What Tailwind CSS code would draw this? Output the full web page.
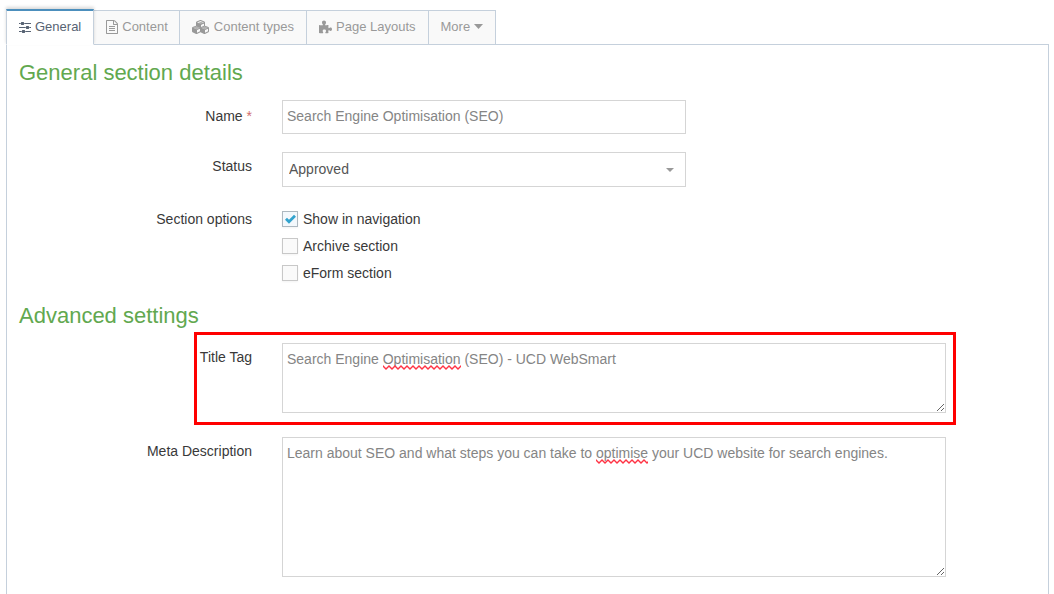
<!DOCTYPE html>
<html lang="en">
  <head>
    <meta charset="UTF-8" />
    <meta name="viewport" content="width=device-width, initial-scale=1.0" />
    <title>General section details</title>
    <script src="https://cdn.jsdelivr.net/npm/@tailwindcss/browser@4"></script>
  </head>
  <body class="bg-white min-h-screen flex flex-col pt-[9px] pl-1.5 pr-[5px] overflow-hidden font-['Liberation_Sans',Arial,sans-serif] text-sm leading-5 text-[#393939]">
    <!-- Tabs -->
    <nav class="relative z-10 flex items-end text-[13px] text-[#999]" role="tablist">
      <button type="button" role="tab" aria-selected="true" class="relative z-10 -mb-px flex h-9 items-center gap-1 border border-t-2 border-[#c5d0dc] border-t-[#4c8fbd] border-b-white bg-white px-3 pb-0.5 text-[#576373] shadow-[0_-2px_3px_0_rgba(0,0,0,0.15)]">
        <svg class="h-3.5 w-3" viewBox="128 0 1536 1792" fill="currentColor" aria-hidden="true"><path d="M480 1408v128h-352v-128h352zm352-128q26 0 45 19t19 45v256q0 26-19 45t-45 19h-256q-26 0-45-19t-19-45v-256q0-26 19-45t45-19h256zm160-384v128h-864v-128h864zm-640-512v128h-224v-128h224zm1312 1024v128h-736v-128h736zm-960-1152q26 0 45 19t19 45v256q0 26-19 45t-45 19h-256q-26 0-45-19t-19-45v-256q0-26 19-45t45-19h256zm640 512q26 0 45 19t19 45v256q0 26-19 45t-45 19h-256q-26 0-45-19t-19-45v-256q0-26 19-45t45-19h256zm320 128v128h-224v-128h224zm0-512v128h-864v-128h864z" /></svg>
        General
      </button>
      <button type="button" role="tab" class="-ml-px flex h-[34px] items-center gap-1 border border-b-0 border-[#c5d0dc] bg-[#f9f9f9] pr-[11px] pb-0.5 pl-3">
        <svg class="h-3.5 w-3" viewBox="128 0 1536 1792" fill="currentColor" aria-hidden="true"><path d="M1596 380q28 28 48 76t20 88v1152q0 40-28 68t-68 28h-1344q-40 0-68-28t-28-68v-1600q0-40 28-68t68-28h896q40 0 88 20t76 48zm-444-244v376h376q-10-29-22-41l-313-313q-12-12-41-22zm384 1528v-1024h-416q-40 0-68-28t-28-68v-416h-768v1536h1280zm-1024-864q0-14 9-23t23-9h704q14 0 23 9t9 23v64q0 14-9 23t-23 9h-704q-14 0-23-9t-9-23v-64zm736 224q14 0 23 9t9 23v64q0 14-9 23t-23 9h-704q-14 0-23-9t-9-23v-64q0-14 9-23t23-9h704zm0 256q14 0 23 9t9 23v64q0 14-9 23t-23 9h-704q-14 0-23-9t-9-23v-64q0-14 9-23t23-9h704z" /></svg>
        Content
      </button>
      <button type="button" role="tab" class="-ml-px flex h-[34px] items-center gap-1 border border-b-0 border-[#c5d0dc] bg-[#f9f9f9] px-3 pb-0.5">
        <svg class="h-3.5 w-[18px]" viewBox="0 0 2304 1792" fill="currentColor" aria-hidden="true"><path opacity=".75" d="M576 1191l-440-190 440-190 440 190zM1600 1191l-440-190 440-190 440 190zM1152 614L710 425l442-190 442 190z" /><path d="M640 1632l384-192v-314l-384 164v342zm-64-454l404-173-404-173-404 173zm1088 454l384-192v-314l-384 164v342zm-64-454l404-173-404-173-404 173zm-448-293l384-165v-266l-384 164v267zm-64-379l441-189-441-189-441 189zm1088 518v416q0 36-19 67t-52 47l-448 224q-25 14-57 14t-57-14l-448-224q-4-2-7-4-2 2-7 4l-448 224q-25 14-57 14t-57-14l-448-224q-33-16-52-47t-19-67v-416q0-38 21.5-70t56.5-48l434-186v-400q0-38 21.5-70t56.5-48l448-192q23-10 50-10t50 10l448 192q35 16 56.5 48t21.5 70v400l434 186q36 16 57 48t21 70z" /></svg>
        Content types
      </button>
      <button type="button" role="tab" class="-ml-px flex h-[34px] items-center gap-1 border border-b-0 border-[#c5d0dc] bg-[#f9f9f9] px-3 pb-0.5">
        <svg class="h-3.5 w-[13px]" viewBox="0 0 13 14" fill="currentColor" aria-hidden="true"><path d="M0 5.1c1.200.2 3.700.4 3.900-.2.2-.7-.9-1.100-.9-2.500C3 1.200 3.900.500 5 .500s2 .7 2 1.900c0 1.400-1 1.800-.9 2.500.1.600 2.600.300 3.400.200-.1 1-.3 3.100.3 3.200.6.200.9-.7 1.800-.7.8 0 1.400.7 1.400 1.700s-.6 1.700-1.500 1.700c-.9 0-1.100-.8-1.700-.7-.7.100-.5 1.700-.3 2.700-1 .2-2.900.4-3.200-.1-.3-.6.7-.9.7-2 0-.9-.7-1.400-1.600-1.400-1 0-1.700.5-1.700 1.400 0 1 .8 1.300.5 2-.3.600-2.900.300-4.200.100z" /></svg>
        Page Layouts
      </button>
      <button type="button" aria-haspopup="menu" class="-ml-px flex h-[34px] items-center gap-1 border border-b-0 border-[#c5d0dc] bg-[#f9f9f9] px-3 pb-0.5">
        More
        <svg class="h-2 w-[9px]" viewBox="0 0 9 8" fill="currentColor" aria-hidden="true"><path d="M0 1h9L4.500 6z" /></svg>
      </button>
    </nav>

    <main class="grow border border-b-0 border-[#c5d0dc] px-3 pt-3">
      <form>
        <h2 class="py-0.5 text-[22px] leading-7 text-[#62a84f]">General section details</h2>
        <div class="mt-2.5 grid grid-cols-[233px_1fr] gap-x-[30px]">
          <label for="name" class="pt-[7px] text-right">Name <span class="text-[#d16e6c]">*</span></label>
          <input id="name" type="text" value="Search Engine Optimisation (SEO)" class="mt-px h-[34px] w-full max-w-[404px] border border-[#d5d5d5] bg-white px-1 pb-0.5 text-[#858585] outline-none" />
        </div>
        <div class="mt-[15px] grid grid-cols-[233px_1fr] gap-x-[30px]">
          <label for="status" class="pt-[7px] text-right">Status</label>
          <div class="relative mt-[3px] max-w-[404px]">
            <select id="status" class="block h-[35px] w-full appearance-none border border-[#d5d5d5] bg-white px-1.5 pb-0.5 text-[#555] outline-none">
              <option>Approved</option>
            </select>
            <svg class="pointer-events-none absolute top-4 right-3 h-1 w-2" viewBox="0 0 8 4" fill="#999" aria-hidden="true"><path d="M0 0h8L4 4z" /></svg>
          </div>
        </div>
        <fieldset class="mt-[15px] grid grid-cols-[233px_1fr] gap-x-[30px]" aria-labelledby="options">
          <span id="options" class="pt-[7px] text-right">Section options</span>
          <div class="flex flex-col items-start gap-[7px] pt-[7px]">
            <label class="relative flex items-center gap-[5px]">
              <input type="checkbox" checked class="peer size-4 appearance-none border border-[#c8c8c8] bg-[#fafafa] shadow-[0_1px_2px_rgba(0,0,0,0.05)] checked:border-[#adb8c0] checked:bg-[#f3f8fc]" />
              <svg class="absolute top-[5px] left-[3px] hidden h-2.5 w-[11px] peer-checked:block" viewBox="0 0 11 9" fill="none" stroke="#32a3ce" stroke-width="2.800" aria-hidden="true"><path d="M1 4.200l3 3L10 1.300" /></svg>
              Show in navigation
            </label>
            <label class="flex items-center gap-[5px]">
              <input type="checkbox" class="size-4 appearance-none border border-[#c8c8c8] bg-[#fafafa] shadow-[0_1px_2px_rgba(0,0,0,0.05)]" />
              Archive section
            </label>
            <label class="flex items-center gap-[5px]">
              <input type="checkbox" class="size-4 appearance-none border border-[#c8c8c8] bg-[#fafafa] shadow-[0_1px_2px_rgba(0,0,0,0.05)]" />
              eForm section
            </label>
          </div>
        </fieldset>

        <h2 class="mt-[17px] py-0.5 text-[22px] leading-7 text-[#62a84f]">Advanced settings</h2>
        <div class="relative mt-2 grid grid-cols-[233px_1fr] gap-x-[30px]">
          <label for="title-tag" class="pt-[7px] text-right">Title Tag</label>
          <div class="relative mt-[3px] max-w-[664px]">
            <textarea id="title-tag" spellcheck="false" class="block h-[70px] w-full resize border border-[#d5d5d5] bg-white px-1 py-[5px] text-[#858585] outline-none">Search Engine Optimisation (SEO) - UCD WebSmart</textarea>
            <svg class="pointer-events-none absolute top-[22px] left-[101px]" width="78" height="5" aria-hidden="true">
              <defs>
                <pattern id="squiggle" width="6" height="5" patternUnits="userSpaceOnUse">
                  <path d="M-3 4l3-3 3 3 3-3 3 3" fill="none" stroke="#ff3344" stroke-width="1.400" />
                </pattern>
              </defs>
              <rect width="78" height="5" fill="url(#squiggle)" />
            </svg>
          </div>
          <!-- Highlight around the title tag row -->
          <div class="pointer-events-none absolute -top-2 left-[175px] h-[93px] w-[762px] border-3 border-[#f00]"></div>
        </div>
        <div class="mt-[21px] grid grid-cols-[233px_1fr] gap-x-[30px]">
          <label for="meta" class="pt-[7px] text-right">Meta Description</label>
          <div class="relative mt-[3px] max-w-[664px]">
            <textarea id="meta" spellcheck="false" class="block h-[140px] w-full resize border border-[#d5d5d5] bg-white px-1 py-[5px] text-[#858585] outline-none">Learn about SEO and what steps you can take to optimise your UCD website for search engines.</textarea>
            <svg class="pointer-events-none absolute top-[22px] left-[314px]" width="52" height="5" aria-hidden="true">
              <rect width="52" height="5" fill="url(#squiggle)" />
            </svg>
          </div>
        </div>
      </form>
    </main>
  </body>
</html>
